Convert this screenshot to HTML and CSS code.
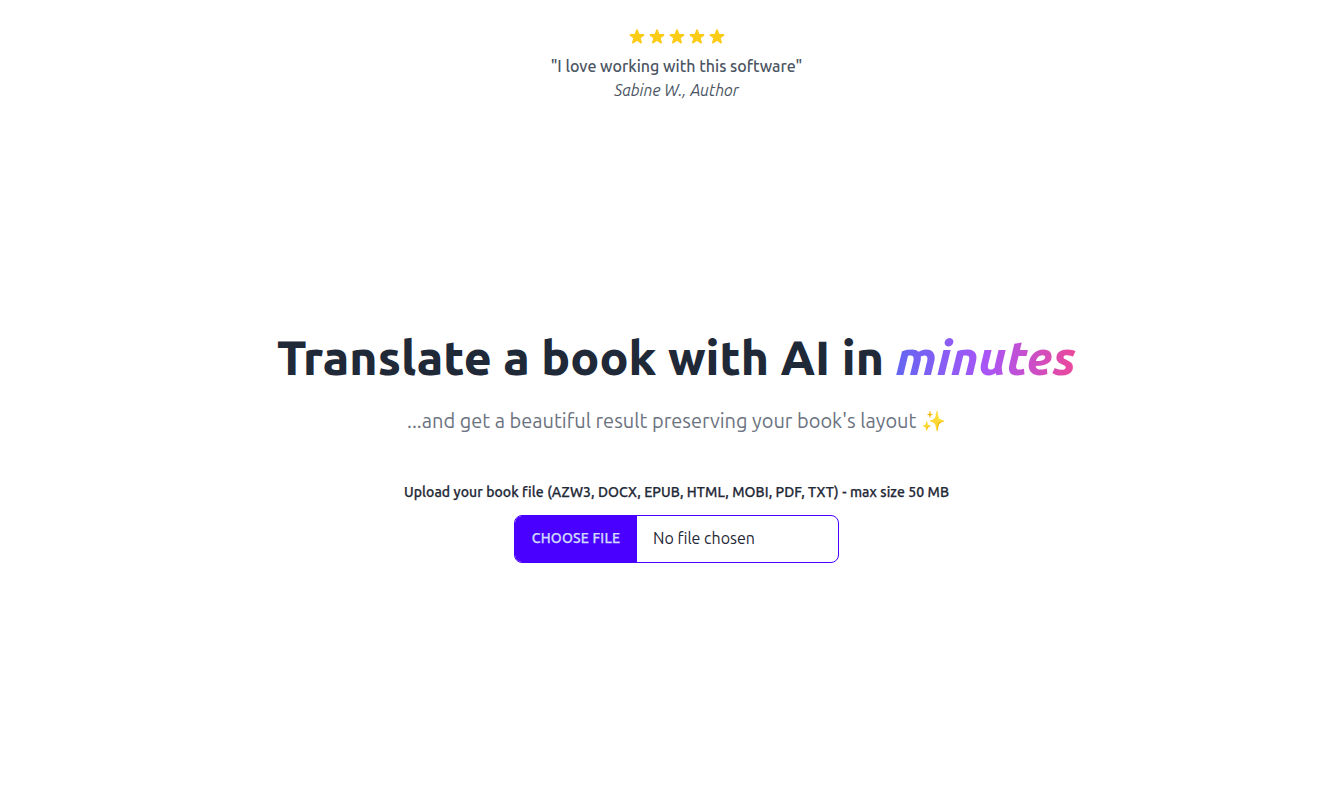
FILE: index.html
```html
<!DOCTYPE html>
<html lang="en">
<head>
<meta charset="utf-8">
<title>Translate a book</title>
<link rel="stylesheet" href="styles.css">
</head>
<body>
<main class="page">
  <section class="review">
    <div class="stars">
      <svg class="star" viewBox="0 0 20 20"><path d="M9.049 2.927c.3-.921 1.603-.921 1.902 0l1.07 3.292a1 1 0 00.95.69h3.462c.969 0 1.371 1.24.588 1.81l-2.8 2.034a1 1 0 00-.364 1.118l1.07 3.292c.3.921-.755 1.688-1.54 1.118l-2.8-2.034a1 1 0 00-1.175 0l-2.8 2.034c-.784.57-1.838-.197-1.539-1.118l1.07-3.292a1 1 0 00-.364-1.118L2.98 8.72c-.783-.57-.38-1.81.588-1.81h3.461a1 1 0 00.951-.69l1.07-3.292z"/></svg>
      <svg class="star" viewBox="0 0 20 20"><path d="M9.049 2.927c.3-.921 1.603-.921 1.902 0l1.07 3.292a1 1 0 00.95.69h3.462c.969 0 1.371 1.24.588 1.81l-2.8 2.034a1 1 0 00-.364 1.118l1.07 3.292c.3.921-.755 1.688-1.54 1.118l-2.8-2.034a1 1 0 00-1.175 0l-2.8 2.034c-.784.57-1.838-.197-1.539-1.118l1.07-3.292a1 1 0 00-.364-1.118L2.98 8.72c-.783-.57-.38-1.81.588-1.81h3.461a1 1 0 00.951-.69l1.07-3.292z"/></svg>
      <svg class="star" viewBox="0 0 20 20"><path d="M9.049 2.927c.3-.921 1.603-.921 1.902 0l1.07 3.292a1 1 0 00.95.69h3.462c.969 0 1.371 1.24.588 1.81l-2.8 2.034a1 1 0 00-.364 1.118l1.07 3.292c.3.921-.755 1.688-1.54 1.118l-2.8-2.034a1 1 0 00-1.175 0l-2.8 2.034c-.784.57-1.838-.197-1.539-1.118l1.07-3.292a1 1 0 00-.364-1.118L2.98 8.72c-.783-.57-.38-1.81.588-1.81h3.461a1 1 0 00.951-.69l1.07-3.292z"/></svg>
      <svg class="star" viewBox="0 0 20 20"><path d="M9.049 2.927c.3-.921 1.603-.921 1.902 0l1.07 3.292a1 1 0 00.95.69h3.462c.969 0 1.371 1.24.588 1.81l-2.8 2.034a1 1 0 00-.364 1.118l1.07 3.292c.3.921-.755 1.688-1.54 1.118l-2.8-2.034a1 1 0 00-1.175 0l-2.8 2.034c-.784.57-1.838-.197-1.539-1.118l1.07-3.292a1 1 0 00-.364-1.118L2.98 8.72c-.783-.57-.38-1.81.588-1.81h3.461a1 1 0 00.951-.69l1.07-3.292z"/></svg>
      <svg class="star" viewBox="0 0 20 20"><path d="M9.049 2.927c.3-.921 1.603-.921 1.902 0l1.07 3.292a1 1 0 00.95.69h3.462c.969 0 1.371 1.24.588 1.81l-2.8 2.034a1 1 0 00-.364 1.118l1.07 3.292c.3.921-.755 1.688-1.54 1.118l-2.8-2.034a1 1 0 00-1.175 0l-2.8 2.034c-.784.57-1.838-.197-1.539-1.118l1.07-3.292a1 1 0 00-.364-1.118L2.98 8.72c-.783-.57-.38-1.81.588-1.81h3.461a1 1 0 00.951-.69l1.07-3.292z"/></svg>
    </div>
    <p class="quote">"I love working with this software"</p>
    <p class="author">Sabine W., Author</p>
  </section>
  <section class="hero">
    <h1 class="title">Translate a book with AI in <em class="accent">minutes</em></h1>
    <p class="subtitle">...and get a beautiful result preserving your book's layout ✨</p>
    <p class="label">Upload your book file (AZW3, DOCX, EPUB, HTML, MOBI, PDF, TXT) - max size 50 MB</p>
    <div class="file">
      <span class="file-btn">CHOOSE FILE</span>
      <span class="file-name">No file chosen</span>
    </div>
  </section>
</main>
</body>
</html>
```
FILE: styles.css
```css
* { box-sizing: border-box; }
html, body { margin: 0; height: 100%; background: #fff; }
body { font-family: "Ubuntu", "Open Sans", "Noto Sans", "DejaVu Sans", sans-serif; color: #1f2937; }
.page { display: flex; flex-direction: column; align-items: center; min-height: 806px; padding: 27px 0 0 15px; }
.review { display: flex; flex-direction: column; align-items: center; }
.stars { display: flex; height: 20px; padding-left: 1px; }
.star { width: 20px; height: 20px; fill: #facc15; }
.quote { margin: 7px 0 0; font-size: 16px; line-height: 24px; font-weight: 500; color: #4b5563; }
.author { margin: 0; font-size: 16px; line-height: 24px; font-style: italic; color: #4b5563; }
.hero { display: flex; flex-direction: column; align-items: center; margin-top: 225px; }
.title { margin: 0; font-size: 48px; line-height: 60px; font-weight: 900; color: #1f2937; }
.accent { background: linear-gradient(to right, #6366f1, #a855f7, #ec4899); -webkit-background-clip: text; background-clip: text; color: transparent; }
.subtitle { margin: 20px 0 0; font-size: 20px; line-height: 28px; font-weight: 400; color: #6b7280; }
.label { margin: 47px 0 0; font-size: 14px; line-height: 20px; font-weight: 500; letter-spacing: 0.09px; -webkit-text-stroke: 0.25px currentColor; color: #1f2937; }
.file { display: flex; width: 325px; height: 48px; margin-top: 13px; border: 1px solid #4a00ff; border-radius: 8px; overflow: hidden; }
.file-btn { display: flex; align-items: center; justify-content: center; width: 122px; padding-bottom: 2px; background: #4a00ff; color: #d1dbff; font-size: 14px; font-weight: 500; letter-spacing: 0.2px; -webkit-text-stroke: 0.25px currentColor; }
.file-name { display: flex; align-items: center; padding: 0 0 2px 16px; font-size: 16px; color: #1f2937; }
```
